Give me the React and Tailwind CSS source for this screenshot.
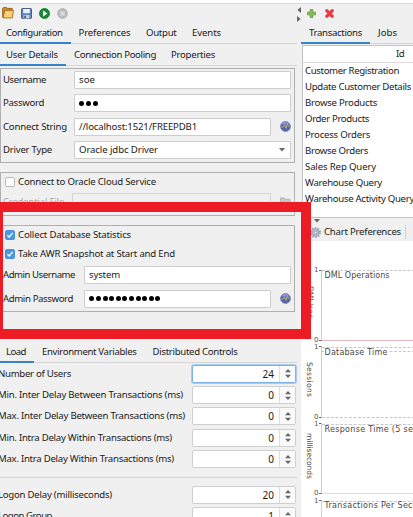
import React, { useLayoutEffect, useRef } from "react";

/* Label whose tracking is computed so that it fills the given width. */
function Label({ w, className = "", children }) {
  const ref = useRef(null);
  useLayoutEffect(() => {
    const el = ref.current;
    el.style.letterSpacing = "0px";
    const natural = el.getBoundingClientRect().width;
    el.style.letterSpacing = (w - natural) / children.length + "px";
  }, [w, children]);
  return (
    <span ref={ref} className={"inline-block shrink-0 whitespace-pre " + className}>
      {children}
    </span>
  );
}

const FolderIcon = () => (
  <svg className="h-3 w-3 shrink-0" viewBox="0 0 12 12">
    <path d="M.7 10.8V1.2l.8-.8h3l.8 1h5v2" fill="#c98a2b" stroke="#8d5a12" strokeWidth=".9" />
    <path d="M1 10.9 2.8 3.4h8.6l-1 7.5z" fill="#f9cf78" stroke="#a96d18" strokeWidth=".9" />
  </svg>
);

const SaveIcon = () => (
  <svg className="h-[11px] w-[11px] shrink-0" viewBox="0 0 11 11">
    <rect x=".5" y=".5" width="10" height="10" rx=".8" fill="#5c82b8" stroke="#49617f" />
    <rect x="2.2" y="1" width="6.6" height="4.2" fill="#eef2f8" />
    <rect x="2.5" y="7" width="6" height="3.5" fill="#c9ced6" />
    <rect x="3.3" y="7.7" width="1.5" height="2.3" fill="#394c6b" />
  </svg>
);

const PlayIcon = () => (
  <svg className="h-[11px] w-[11px] shrink-0" viewBox="0 0 11 11">
    <circle cx="5.5" cy="5.5" r="5" fill="#168a35" stroke="#0d6d27" strokeWidth=".8" />
    <path d="M4 2.6 8.4 5.5 4 8.4z" fill="#fff" />
  </svg>
);

const StopIcon = () => (
  <svg className="h-[11px] w-[11px] shrink-0" viewBox="0 0 11 11">
    <circle cx="5.5" cy="5.5" r="4.8" fill="#bdbdbd" stroke="#a9a9a9" strokeWidth=".9" />
    <rect x="3.4" y="3.4" width="4.2" height="4.2" fill="#d8d8d8" />
  </svg>
);

const PulseIcon = () => (
  <svg className="h-[11px] w-[11px] shrink-0" viewBox="0 0 11 11">
    <circle cx="5.5" cy="5.5" r="4.9" fill="#4d62b5" stroke="#7a7f98" strokeWidth=".9" />
    <path d="M1.5 3.6a4.2 4.2 0 0 1 8 0z" fill="#8796d4" />
    <path d="M1.4 6h2l1.2-2.2 1.5 3.6 1.3-4 .9 1.8h1.3" fill="none" stroke="#d5b557" strokeWidth=".9" />
  </svg>
);

const GearIcon = () => (
  <svg className="h-[11px] w-[11px] shrink-0" viewBox="0 0 11 11">
    <circle cx="5.5" cy="5.5" r="4.5" fill="none" stroke="#8d97a8" strokeWidth="1.7" strokeDasharray="1.6 1.23" />
    <circle cx="5.5" cy="5.5" r="3.8" fill="#b3bccb" stroke="#919bad" strokeWidth=".6" />
    <circle cx="5.5" cy="5.5" r="1.4" fill="#e9edf3" stroke="#7d889c" strokeWidth=".6" />
  </svg>
);

const PlusIcon = () => (
  <svg className="h-[9px] w-[9px] shrink-0" viewBox="0 0 9 9">
    <path d="M3.2.6h2.6v2.6h2.6v2.6H5.8v2.6H3.2V5.8H.6V3.2h2.6z" fill="#8cc152" stroke="#5e9135" strokeWidth=".8" />
  </svg>
);

const CrossIcon = () => (
  <svg className="h-[9px] w-[9px] shrink-0" viewBox="0 0 9 9">
    <path d="M.7.7h2.2l1.6 2 1.6-2h2.2v1.8l-2 2 2 2v1.8H6.1l-1.6-2-1.6 2H.7V6.5l2-2-2-2z" fill="#ed3940" stroke="#c92b31" strokeWidth=".6" />
  </svg>
);

function Tabs({ items, height, className = "" }) {
  return (
    <div className={"flex shrink-0 border-b border-[#d5d5d5] " + height + " " + className}>
      {items.map((t, i) => (
        <div
          key={t.name}
          className={
            "-mb-px flex h-[calc(100%+1px)] shrink-0 items-center border-b-2 pt-[2px] " +
            t.pad + " " +
            (i === 0 ? "border-[#3584cb]" : "border-transparent")
          }
        >
          <Label w={t.w}>{t.name}</Label>
        </div>
      ))}
    </div>
  );
}

function Field({ className = "", children }) {
  return (
    <div className={"flex h-[18px] shrink-0 items-center rounded-[1px] border border-[#cdcdcd] bg-white pl-1 " + className}>
      {children}
    </div>
  );
}

function Dots({ count }) {
  return (
    <div className="flex items-center gap-[1.6px] pl-[0.4px]">
      {Array.from({ length: count }, (_, i) => (
        <span key={i} className="size-[5px] rounded-full bg-black" />
      ))}
    </div>
  );
}

function Check({ on, w, children }) {
  return (
    <div className="flex h-[11px] items-center pl-[4px]">
      <span className={"mr-[3px] flex size-[10px] items-center justify-center rounded-[2px] border " + (on ? "border-[#4a90d9] bg-[#4a98e2]" : "border-[#b9b9b9] bg-white")}>
        {on && (
          <svg className="size-2 shrink-0" viewBox="0 0 8 8">
            <path d="M1.4 4.2 3.2 6 6.7 1.8" fill="none" stroke="#fff" strokeWidth="1.3" />
          </svg>
        )}
      </span>
      <Label w={w}>{children}</Label>
    </div>
  );
}

function Spinner({ value, focus }) {
  return (
    <div
      className={
        "flex h-[18px] w-[104px] shrink-0 rounded-[2px] border bg-white " +
        (focus ? "border-[#7db4e8] ring-1 ring-[#a5cbef]" : "border-[#cfcfcf]")
      }
    >
      <div className="flex flex-1 items-center justify-end pr-[5px] text-[10px]">{value}</div>
      <div className="flex w-4 items-center justify-center border-l border-[#dedede] bg-[#fafafa]">
        <svg className="h-[9px] w-[6px]" viewBox="0 0 6 9">
          <path d="M0 3.2 3 0l3 3.2zM0 5.8h6L3 9z" fill="#666" />
        </svg>
      </div>
    </div>
  );
}

const loadRows = [
  { label: "Number of Users", w: 73, value: "24", focus: true },
  { label: "Min. Inter Delay Between Transactions (ms)", w: 185, value: "0" },
  { label: "Max. Inter Delay Between Transactions (ms)", w: 187, value: "0" },
  { label: "Min. Intra Delay Within Transactions (ms)", w: 174, value: "0" },
  { label: "Max. Intra Delay Within Transactions (ms)", w: 176, value: "0" },
];

const logonRows = [
  { label: "Logon Delay (milliseconds)", w: 114, value: "20" },
  { label: "Logon Group", w: 54, value: "1" },
];

function LoadRow({ row }) {
  return (
    <div className="flex h-[21.4px] shrink-0 items-center">
      <div className="-ml-[2px] flex w-[194px] shrink-0">
        <Label w={row.w}>{row.label}</Label>
      </div>
      <Spinner value={row.value} focus={row.focus} />
    </div>
  );
}

const transactions = [
  ["Customer Registration", 94],
  ["Update Customer Details", 106],
  ["Browse Products", 72],
  ["Order Products", 64],
  ["Process Orders", 65],
  ["Browse Orders", 63],
  ["Sales Rep Query", 71],
  ["Warehouse Query", 77],
  ["Warehouse Activity Query", 109],
];

function LeftPane() {
  return (
    <div className="flex w-[297px] shrink-0 flex-col">
      <div className="flex h-[18px] shrink-0 items-center pl-[2px]">
        <FolderIcon />
        <div className="ml-[7px] flex gap-[7px]">
          <SaveIcon />
          <PlayIcon />
          <StopIcon />
        </div>
      </div>
      <Tabs
        height="h-[22px]"
        items={[
          { name: "Configuration", w: 56.5, pad: "pl-[6px] pr-[8px]" },
          { name: "Preferences", w: 52, pad: "pl-[8px] pr-[8px]" },
          { name: "Output", w: 30.5, pad: "pl-[7.5px] pr-[8px]" },
          { name: "Events", w: 29, pad: "pl-[7.5px] pr-[8px]" },
        ]}
      />
      <Tabs
        height="h-[22px]"
        items={[
          { name: "User Details", w: 52, pad: "pl-[6px] pr-[8px]" },
          { name: "Connection Pooling", w: 82, pad: "pl-[8px] pr-[8px]" },
          { name: "Properties", w: 44, pad: "pl-[7px] pr-[8px]" },
        ]}
      />

      <div className="mt-[2px] flex h-[95px] w-[295px] shrink-0 flex-col gap-[5.4px] border border-[#b0b0b0] pt-[2px]">
        <div className="flex items-center pl-[2px]">
          <div className="flex w-[71px]"><Label w={43}>Username</Label></div>
          <Field className="w-[217px]"><Label w={16}>soe</Label></Field>
        </div>
        <div className="flex items-center pl-[2px]">
          <div className="flex w-[71px]"><Label w={41}>Password</Label></div>
          <Field className="w-[217px]"><Dots count={3} /></Field>
        </div>
        <div className="flex items-center pl-[2px]">
          <div className="flex w-[71px]"><Label w={64}>Connect String</Label></div>
          <Field className="mr-[9px] w-[197px]"><Label w={118}>//localhost:1521/FREEPDB1</Label></Field>
          <PulseIcon />
        </div>
        <div className="flex items-center pl-[2px]">
          <div className="flex w-[71px]"><Label w={49}>Driver Type</Label></div>
          <Field className="w-[217px] justify-between pr-[5px]">
            <Label w={79}>Oracle jdbc Driver</Label>
            <svg className="h-1 w-[6px]" viewBox="0 0 6 4"><path d="M0 0h6L3 3.6z" fill="#666" /></svg>
          </Field>
        </div>
      </div>

      <div className="mt-[9px] flex h-[44px] w-[295px] shrink-0 flex-col border border-[#b0b0b0] pt-[3px]">
        <Check w={138}>Connect to Oracle Cloud Service</Check>
        <div className="mt-[6px] flex items-center pl-[2px] text-[#a9a9a9]">
          <div className="flex w-[69px]"><Label w={61}>Credential File</Label></div>
          <div className="mr-[9px] h-[18px] w-[199px] border border-[#d5d5d5]" />
          <svg className="h-[10px] w-[11px]" viewBox="0 0 11 10">
            <path d="M.5 9V1h3.6l1 1.3H10V9z" fill="#c8c8c8" stroke="#b3b3b3" />
            <path d="M1 9.2 2.4 4.8h8.1L9.8 9.2z" fill="#dadada" stroke="#b3b3b3" strokeWidth=".7" />
          </svg>
        </div>
      </div>

      <div className="mt-[9px] flex h-[87px] w-[295px] shrink-0 flex-col border border-[#b0b0b0] pt-[3px]">
        <Check on w={113}>Collect Database Statistics</Check>
        <div className="mt-[8px]"><Check on w={157}>Take AWR Snapshot at Start and End</Check></div>
        <div className="mt-[7px] flex items-center pl-[2px]">
          <div className="flex w-[81px]"><Label w={72}>Admin Username</Label></div>
          <Field className="w-[207px]"><Label w={31}>system</Label></Field>
        </div>
        <div className="mt-[5.5px] flex items-center pl-[2px]">
          <div className="flex w-[81px]"><Label w={70}>Admin Password</Label></div>
          <Field className="mr-[9px] w-[187px]"><Dots count={11} /></Field>
          <PulseIcon />
        </div>
      </div>

      <div className="mt-[28px] flex flex-col">
        <Tabs
          height="h-[23px]"
          items={[
            { name: "Load", w: 20, pad: "pl-[6px] pr-[8px]" },
            { name: "Environment Variables", w: 94.5, pad: "pl-[8px] pr-[8px]" },
            { name: "Distributed Controls", w: 85, pad: "pl-[8px] pr-[8px]" },
          ]}
        />
        <div className="flex flex-col">
          {loadRows.map((r) => <LoadRow key={r.label} row={r} />)}
        </div>
        <div className="mt-[7px] mb-[6px] h-px bg-[#d6d6d6]" />
        <div className="flex flex-col">
          {logonRows.map((r) => <LoadRow key={r.label} row={r} />)}
        </div>
      </div>
    </div>
  );
}

function Charts() {
  return (
    <svg className="h-[276px] w-[112px] shrink-0 bg-white" viewBox="301 241 112 276" fontFamily="'DejaVu Sans', sans-serif">
      <g fill="none" strokeWidth="1">
        <path d="M321.5 270V340M321.5 347V417M321.5 424V493M321.5 501V517" stroke="#d0d0d0" />
        <path d="M322 270.5H413M322 347.5H413M322 351.5H413M322 417.5H413M322 424.5H413M322 501.5H413" stroke="#c9c9c9" strokeDasharray="3 1.5" />
        <path d="M321 340.5H413" stroke="#dfb9bc" />
        <path d="M321 493.5H413" stroke="#e9dfae" />
        <path d="M319 270.5h2.5M319 340.5h2.5M319 346.5h2.5M319 417.5h2.5M319 423.5h2.5M319 493.5h2.5M319 500.5h2.5" stroke="#666" />
      </g>
      <g fill="#fff">
        <rect x="324" y="349" width="64" height="7" />
      </g>
      <g fontSize="8" fill="#484848">
        <text x="324.5" y="278" textLength="65">DML Operations</text>
        <text x="324.5" y="355" textLength="63">Database Time</text>
        <text x="324.5" y="432" textLength="117">Response Time (5 seconds)</text>
        <text x="324.5" y="508" textLength="104">Transactions Per Second</text>
      </g>
      <g fontSize="7" fill="#555">
        <text x="314" y="272">1</text>
        <text x="314" y="342">0</text>
        <text x="314" y="349">1</text>
        <text x="314" y="419">0</text>
        <text x="314" y="426">1</text>
        <text x="314" y="495">0</text>
        <text x="314" y="503">1</text>
      </g>
      <g fontSize="7.5" fill="#444">
        <text transform="translate(308 286) rotate(90)" textLength="32">DML/sec</text>
        <text transform="translate(307 362) rotate(90)" textLength="35">Sessions</text>
        <text transform="translate(307 433) rotate(90)" textLength="46">milliseconds</text>
      </g>
    </svg>
  );
}

function RightPane() {
  return (
    <div className="flex w-[112px] shrink-0 flex-col overflow-hidden">
      <div className="flex h-[18px] shrink-0 items-center gap-[9px] pl-[5.5px]">
        <PlusIcon />
        <CrossIcon />
      </div>
      <Tabs
        height="h-[22px]"
        items={[
          { name: "Transactions", w: 53, pad: "pl-[8px] pr-[8px]" },
          { name: "Jobs", w: 19, pad: "pl-[8px] pr-[8px]" },
        ]}
      />
      <div className="mt-px ml-px flex h-[173px] w-[120px] shrink-0 flex-col border border-[#c2c2c2] bg-white">
        <div className="flex h-[17px] shrink-0 items-center border-b border-[#dcdcdc] pl-[93px]">
          <Label w={8}>Id</Label>
        </div>
        {transactions.map(([name, w]) => (
          <div key={name} className="flex h-4 shrink-0 items-center pl-[2px]">
            <Label w={w}>{name}</Label>
          </div>
        ))}
      </div>
      <div className="flex h-[23px] shrink-0 flex-col">
        <svg className="mt-px ml-[13px] h-1 w-[6px] shrink-0" viewBox="0 0 6 4"><path d="M0 0h6L3 3.6z" fill="#666" /></svg>
        <div className="ml-[9px] flex h-[18px] items-center">
          <GearIcon />
          <Label w={77} className="ml-[3px]">Chart Preferences</Label>
          <div className="ml-[4px] h-[14px] w-px shrink-0 bg-[#cfcfcf]" />
        </div>
      </div>
      <Charts />
    </div>
  );
}

export default function App() {
  return (
    <div className="relative flex h-[517px] w-[413px] flex-col overflow-hidden bg-[#f0f0f0] font-['Noto_Sans','Open_Sans',sans-serif] text-[9.6px] leading-[14px] text-[#1a1a1a]">
      <div className="h-1 shrink-0 border-b border-[#d9d9d9] bg-white" />
      <div className="flex flex-1">
        <LeftPane />
        <div className="flex w-1 shrink-0 flex-col items-start gap-[3px] pt-[3px]">
          <svg className="h-[6px] w-1 shrink-0" viewBox="0 0 4 6"><path d="M4 0v6L.3 3z" fill="#666" /></svg>
          <svg className="h-[6px] w-1 shrink-0" viewBox="0 0 4 6"><path d="M0 0v6l3.7-3z" fill="#666" /></svg>
        </div>
        <RightPane />
      </div>
      <div className="absolute top-[202px] left-0 h-[137px] w-[311px] border-y-10 border-r-10 border-l-3 border-[#ed1c24]" />
    </div>
  );
}
